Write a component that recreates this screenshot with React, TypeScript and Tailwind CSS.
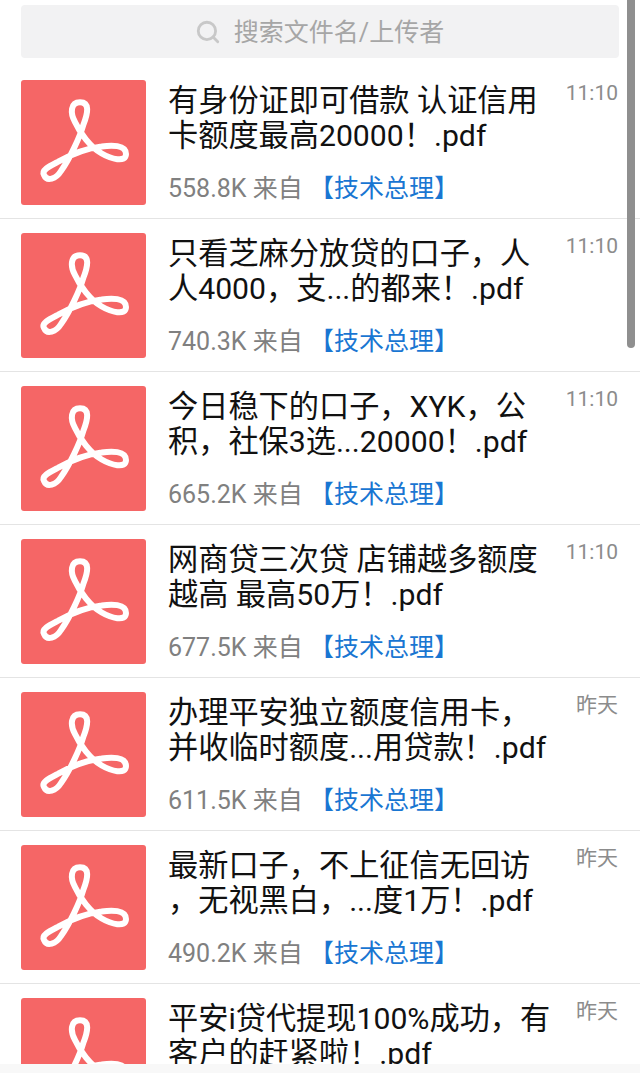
import { Search } from 'lucide-react'

const files = [
  { lines: ['有身份证即可借款 认证信用', '卡额度最高20000！.pdf'], size: '558.8K', time: '11:10' },
  { lines: ['只看芝麻分放贷的口子，人', '人4000，支...的都来！.pdf'], size: '740.3K', time: '11:10' },
  { lines: ['今日稳下的口子，XYK，公', '积，社保3选...20000！.pdf'], size: '665.2K', time: '11:10' },
  { lines: ['网商贷三次贷 店铺越多额度', '越高 最高50万！.pdf'], size: '677.5K', time: '11:10' },
  { lines: ['办理平安独立额度信用卡，', '并收临时额度...用贷款！.pdf'], size: '611.5K', time: '昨天' },
  { lines: ['最新口子，不上征信无回访', '，无视黑白，...度1万！.pdf'], size: '490.2K', time: '昨天' },
  { lines: ['平安i贷代提现100%成功，有', '客户的赶紧啦！.pdf'], size: '', time: '昨天' },
]

function PdfIcon() {
  return (
    <div className="w-[125px] h-[125px] shrink-0 rounded-[3px] bg-[#f56666]">
      <svg viewBox="0 0 125 125" className="w-full h-full" fill="none">
        <path
          d="M59 22.3C49.5 22.3 49 33 54 42C59 53 69 66.7 80.7 73.5C90 79 105 83 105 74C105 64.5 90 65 80.7 66.5C65.7 68.3 49 75 37.3 81.7C29 86 20 90 23 95C26 102 35 99 40 91C49 78.3 59 56.7 62.3 45C67 33 69 22.3 59 22.3Z"
          stroke="#fff"
          strokeWidth="6"
          strokeLinejoin="round"
        />
      </svg>
    </div>
  )
}

export default function App() {
  return (
    <div className="relative w-[640px] h-[1073px] overflow-hidden bg-white font-['Roboto','Noto_Sans_CJK_SC',sans-serif]">
      {/* Search */}
      <div className="px-[21px] pt-[5px] pb-[8px]">
        <div className="h-[53px] rounded-[4px] bg-[#f2f2f3] flex items-center justify-center gap-[13px] pr-[1px]">
          <Search className="w-[26px] h-[26px] text-[#c8c8c8]" strokeWidth={2.6} />
          <span className="text-[25px] text-[#a6a6a6] pt-[2px]">搜索文件名/上传者</span>
        </div>
      </div>

      {/* List */}
      <div>
        {files.map((file, i) => (
          <div key={i} className="flex h-[153px] pt-[14px] pl-[21px] pr-[22px] border-b border-[#e4e4e4]">
            <PdfIcon />
            <div className="flex-1 pl-[22px]">
              <div className="text-[30.2px] leading-[35px] text-[#111] whitespace-nowrap pt-[3px]">
                {file.lines.map((line) => (
                  <div key={line}>{line}</div>
                ))}
              </div>
              {file.size && (
                <div className="mt-[19px] text-[25px] leading-[34px] whitespace-nowrap text-[#808080]">
                  {file.size} 来自 <span className="text-[#1976d2]">【技术总理】</span>
                </div>
              )}
            </div>
            <div className="text-[21px] leading-[26px] text-[#8c8c8c] whitespace-nowrap">{file.time}</div>
          </div>
        ))}
      </div>

      {/* Scrollbar */}
      <div className="absolute top-0 right-[5px] w-[8px] h-[348px] rounded-b-[4px] bg-[#8f8f8f]" />
      {/* Bottom bar */}
      <div className="absolute bottom-0 left-0 right-0 h-[9px] bg-[#f8f8f8]" />
    </div>
  )
}
